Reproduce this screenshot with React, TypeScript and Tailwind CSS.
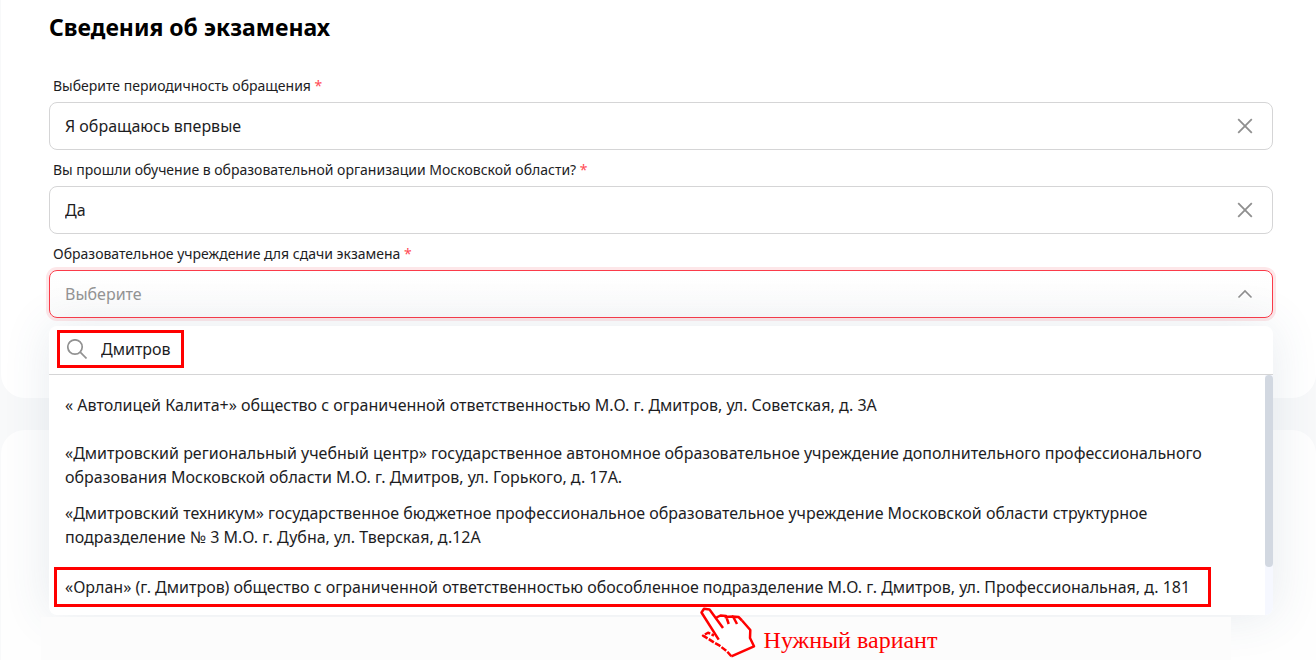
import { useState } from 'react';
import type { ReactNode } from 'react';

const options = [
  ['« Автолицей Калита+» общество с ограниченной ответственностью М.О. г. Дмитров, ул. Советская, д. 3А'],
  [
    '«Дмитровский региональный учебный центр» государственное автономное образовательное учреждение дополнительного профессионального',
    'образования Московской области М.О. г. Дмитров, ул. Горького, д. 17А.',
  ],
  [
    '«Дмитровский техникум» государственное бюджетное профессиональное образовательное учреждение Московской области структурное',
    'подразделение № 3 М.О. г. Дубна, ул. Тверская, д.12А',
  ],
];

const highlighted =
  '«Орлан» (г. Дмитров) общество с ограниченной ответственностью обособленное подразделение М.О. г. Дмитров, ул. Профессиональная, д. 181';

function FieldLabel({ id, children }: { id: string; children: ReactNode }) {
  return (
    <label htmlFor={id} className="block px-1 pt-2 pb-1 text-sm leading-6">
      {children} <span className="text-[#ff4b55]">*</span>
    </label>
  );
}

function ClearableField({ id, label, initial }: { id: string; label: string; initial: string }) {
  const [value, setValue] = useState(initial);

  return (
    <div>
      <FieldLabel id={id}>{label}</FieldLabel>
      <div className="flex h-12 items-center rounded-lg border border-[#d5d5d6] bg-white pr-[19px] pl-[15px]">
        <input
          id={id}
          value={value}
          onChange={(e) => setValue(e.target.value)}
          className="min-w-0 flex-1 bg-transparent text-base outline-none"
        />
        <button type="button" aria-label="Очистить" onClick={() => setValue('')}>
          <svg className="h-4 w-4" viewBox="0 0 16 16" fill="none" stroke="#8f8f8f" strokeWidth="1.8">
            <path d="M1.2 1.2l13.6 13.6M14.8 1.2L1.2 14.8" />
          </svg>
        </button>
      </div>
    </div>
  );
}

function Dropdown() {
  const [query, setQuery] = useState('Дмитров');

  return (
    <div className="absolute inset-x-0 top-14 z-10 overflow-hidden rounded-lg bg-white shadow-[0_0_48px_rgba(60,90,120,0.12)]">
      <div className="border-b border-[#d5d5d6] px-2 pt-1 pb-1.5">
        <label className="flex h-[38px] w-[127px] items-center gap-3.5 border-3 border-[#ff0000] pl-[7px]">
          <svg className="h-5 w-5 shrink-0" viewBox="0 0 20 20" fill="none" stroke="#929292" strokeWidth="1.7">
            <circle cx="8" cy="8" r="7.2" />
            <path d="M13.2 13.2L19.5 19.5" />
          </svg>
          <input
            aria-label="Поиск"
            value={query}
            onChange={(e) => setQuery(e.target.value)}
            className="min-w-0 flex-1 bg-transparent text-base outline-none"
          />
        </label>
      </div>
      <div className="flex">
        <ul className="min-w-0 flex-1">
          {options.map((lines) => (
            <li key={lines[0]}>
              <button type="button" className="flex min-h-15 w-full flex-col justify-center px-4 text-left text-base leading-6">
                {lines.map((line) => (
                  <span key={line} className="block whitespace-nowrap">
                    {line}
                  </span>
                ))}
              </button>
            </li>
          ))}
          <li className="pt-3 pr-[54px] pb-2 pl-[5px]">
            <button
              type="button"
              className="flex h-10 w-full items-center border-3 border-[#ff0000] px-2 text-left text-base leading-6 whitespace-nowrap"
            >
              {highlighted}
            </button>
          </li>
        </ul>
        <div className="w-2 bg-[#f6f8ff]">
          <div className="h-48 rounded-full bg-[#d2d8e1]" />
        </div>
      </div>
    </div>
  );
}

function PointingHand() {
  return (
    <svg
      className="h-[54px] w-14"
      viewBox="0 0 56 54"
      fill="none"
      stroke="#ff0000"
      strokeWidth="2.5"
      strokeLinejoin="round"
    >
      <path
        fill="#fff"
        stroke="none"
        d="M2 6L5 3L9 4L16 11L22 9L38 11L50 24L50 32L54 40L31 50L3 30L8 27L13 29Z"
      />
      <path d="M18.7 33.7L1.5 6.5L4 2.8L9.5 3.5L23 22" />
      <path d="M15.5 12L20.5 9.5L26 10L28.7 18M24.5 11L33 10.5L37 18M32 10.5L38.5 11L42 14.5" />
      <path d="M42 14.5L50.3 24L50 32L54 40.3L31.3 50.3" />
      <path d="M31.3 50.3L27.3 45.7L19.7 39.7L14 36.5L8.7 33L3 29.7L8 26.7L14 29.5" strokeDasharray="6 1.5" />
    </svg>
  );
}

export default function App() {
  return (
    <div className="h-screen overflow-hidden bg-[#f8f9fa] pl-px font-['Noto_Sans','Open_Sans',sans-serif] text-[#1d1d1f]">
      <section className="rounded-b-3xl bg-white pt-3 pr-[43px] pb-20 pl-12">
        <h1 className="mb-6 text-[23px] leading-[30px] font-bold text-black">Сведения об экзаменах</h1>
        <ClearableField id="frequency" label="Выберите периодичность обращения" initial="Я обращаюсь впервые" />
        <ClearableField
          id="region"
          label="Вы прошли обучение в образовательной организации Московской области?"
          initial="Да"
        />
        <FieldLabel id="school">Образовательное учреждение для сдачи экзамена</FieldLabel>
        <div className="relative">
          <button
            id="school"
            type="button"
            aria-expanded="true"
            className="flex h-12 w-full items-center justify-between rounded-lg border border-[#fb3b49] bg-gradient-to-b from-white to-[#fcfcfc] pr-[19px] pl-[15px] ring-3 ring-[#fde7e9]"
          >
            <span className="text-base text-[#949494]">Выберите</span>
            <svg className="h-4 w-4" viewBox="0 0 16 16" fill="none" stroke="#8f8f8f" strokeWidth="1.6">
              <path d="M1.5 11.5L8 5l6.5 6.5" />
            </svg>
          </button>
          <Dropdown />
        </div>
      </section>
      <section className="mt-8 flex h-[230px] flex-col rounded-t-3xl bg-[#fefefe] pt-[187px] pr-[85px] pl-10">
        {/* the note sits above the list's shadow, the hand reaches over its edge */}
        <div className="relative z-20 flex h-[43px] items-end justify-center gap-2 bg-[#fcfcfc] pl-[365px]">
          <PointingHand />
          <p className="pb-1.5 font-['Liberation_Serif',serif] text-2xl leading-7 text-[#ff0000]">Нужный вариант</p>
        </div>
      </section>
    </div>
  );
}
